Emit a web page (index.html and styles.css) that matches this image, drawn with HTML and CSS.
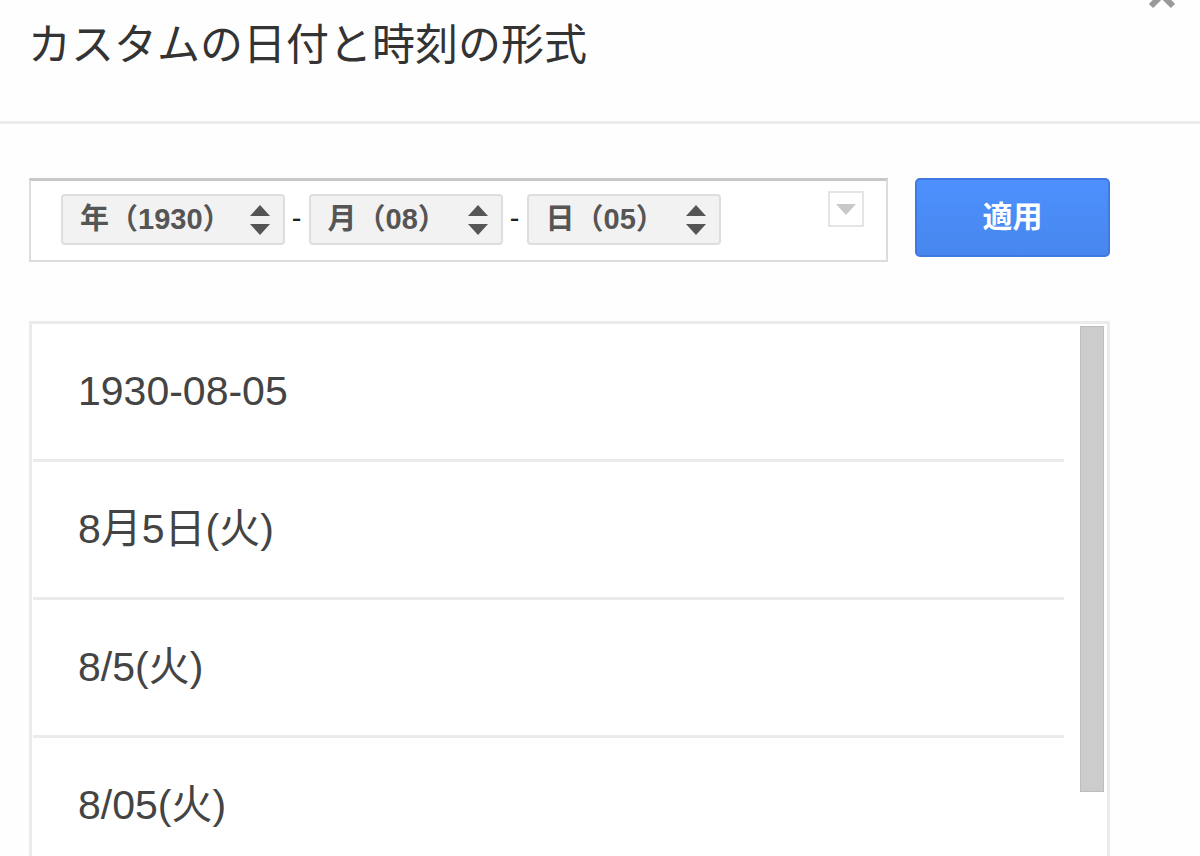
FILE: index.html
```html
<!DOCTYPE html>
<html lang="ja">
<head>
<meta charset="utf-8">
<title>カスタムの日付と時刻の形式</title>
<link rel="stylesheet" href="styles.css">
</head>
<body>
<main class="dialog">
  <header class="dialog-header">
    <h1 class="dialog-title">カスタムの日付と時刻の形式</h1>
    <button class="close" type="button" aria-label="閉じる">
      <svg width="30" height="30" viewBox="0 0 30 30"><path d="M4 4l22 22M26 4l-22 22" stroke="#999" stroke-width="6" fill="none"/></svg>
    </button>
  </header>
  <div class="dialog-body">
    <div class="format-row">
      <div class="format-box">
        <button class="chip" type="button">年（1930）<svg class="arrows" width="20" height="30" viewBox="0 0 20 30"><path d="M0 11L10 0l10 11zM0 19h20L10 30z" fill="#555"/></svg></button>
        <span class="dash">-</span>
        <button class="chip" type="button">月（08）<svg class="arrows" width="20" height="30" viewBox="0 0 20 30"><path d="M0 11L10 0l10 11zM0 19h20L10 30z" fill="#555"/></svg></button>
        <span class="dash">-</span>
        <button class="chip" type="button">日（05）<svg class="arrows" width="20" height="30" viewBox="0 0 20 30"><path d="M0 11L10 0l10 11zM0 19h20L10 30z" fill="#555"/></svg></button>
        <button class="menu-toggle" type="button" aria-label="形式を追加">
          <svg width="20" height="11" viewBox="0 0 20 11"><path d="M0 0h20L10 11z" fill="#c8c8c8"/></svg>
        </button>
      </div>
      <button class="apply" type="button">適用</button>
    </div>
    <div class="list-frame">
      <ul class="format-list">
        <li class="format-item">1930-08-05</li>
        <li class="format-item">8月5日(火)</li>
        <li class="format-item">8/5(火)</li>
        <li class="format-item">8/05(火)</li>
      </ul>
      <div class="scroll-thumb"></div>
    </div>
  </div>
</main>
</body>
</html>
```
FILE: styles.css
```css
* { box-sizing: border-box; }
body {
  margin: 0;
  background: #fefefe;
  color: #444;
  font-family: "Liberation Sans", "Noto Sans CJK JP", sans-serif;
}
button { font-family: inherit; cursor: pointer; }
svg { display: block; }
.dialog {
  position: relative;
  display: flex;
  flex-direction: column;
  height: 100vh;
  overflow: hidden;
}
.dialog-header {
  padding: 13px 28px 44px;
  border-bottom: 3px solid #ebebeb;
}
.dialog-title {
  margin: 0;
  color: #333;
  font-size: 43px;
  font-weight: 400;
  line-height: 64px;
}
.close {
  position: absolute;
  top: -20px;
  right: 23px;
  padding: 0;
  border: 0;
  background: none;
}
.dialog-body {
  flex: 1;
  display: flex;
  flex-direction: column;
  padding: 54px 90px 0 29px;
}
.format-row {
  display: flex;
  align-items: flex-start;
  gap: 27px;
}
.format-box {
  flex: 1;
  display: flex;
  align-items: flex-start;
  height: 84px;
  padding: 13px 22px 0 30px;
  border: 2px solid #dcdcdc;
  border-top: 3px solid #c8c8c8;
  background: #fff;
}
.chip {
  display: flex;
  align-items: center;
  justify-content: space-between;
  gap: 18px;
  min-width: 194px;
  height: 51px;
  padding: 0 13px 2px 17px;
  border: 2px solid #dedede;
  border-radius: 4px;
  background: #f2f2f2;
  color: #555;
  font-size: 29px;
  font-weight: bold;
  line-height: 44px;
  white-space: nowrap;
}
.arrows { margin-top: 2px; }
.dash {
  width: 24px;
  color: #222;
  font-size: 29px;
  line-height: 48px;
  text-align: center;
}
.menu-toggle {
  display: flex;
  align-items: center;
  justify-content: center;
  width: 36px;
  height: 36px;
  margin: -3px 0 0 auto;
  padding: 0;
  border: 2px solid #e5e5e5;
  background: #fff;
}
.apply {
  width: 195px;
  height: 79px;
  padding: 0 0 8px;
  border: 2px solid #4079e0;
  border-radius: 5px;
  background: linear-gradient(#4d90fe, #4787ed);
  color: #fff;
  font-size: 30px;
  font-weight: bold;
}
.list-frame {
  flex: 1;
  display: flex;
  align-items: flex-start;
  gap: 16px;
  margin-top: 59px;
  padding: 0 3px 0 1px;
  border: 3px solid #ebebeb;
  border-bottom: 0;
  background: #fff;
}
.format-list {
  flex: 1;
  margin: 0;
  padding: 0;
  list-style: none;
}
.format-item {
  height: 138px;
  padding: 0 45px;
  border-bottom: 3px solid #ebebeb;
  font-size: 41px;
  line-height: 134px;
}
.scroll-thumb {
  width: 24px;
  height: 466px;
  margin-top: 2px;
  border: 1px solid #bdbdbd;
  background: #ccc;
}
```
